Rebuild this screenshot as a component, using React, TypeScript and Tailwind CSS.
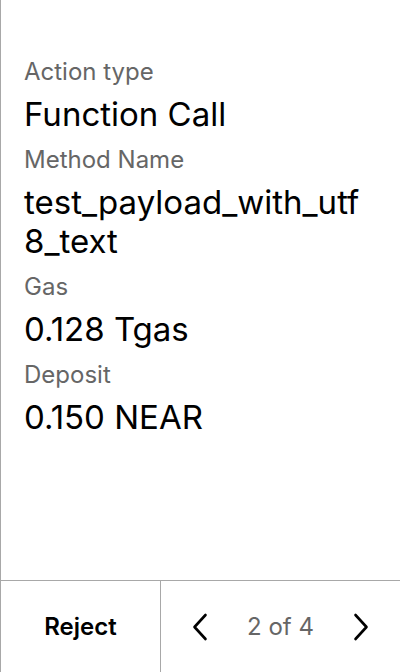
import React from "react";

const Field = ({ label, value }: { label: string; value: string }) => {
  return (
    <div>
      <div className="text-[24px] leading-[28px] text-[#666666] mb-[9px]">{label}</div>
      <div className="text-[33px] leading-[39px] text-black break-all mb-[12px]">{value}</div>
    </div>
  );
};

const App = () => {
  return (
    <div
      className="h-[672px] w-[400px] flex flex-col bg-white border-l border-[#a8a8a8]"
      style={{ fontFamily: "Inter, 'Noto Sans', sans-serif" }}
    >
      <div className="flex-1 pl-[23px] pr-[36px] pt-[58px]">
        <Field label="Action type" value="Function Call" />
        <Field label="Method Name" value="test_payload_with_utf8_text" />
        <Field label="Gas" value="0.128 Tgas" />
        <Field label="Deposit" value="0.150 NEAR" />
      </div>
      <div className="h-[92px] flex border-t border-[#a8a8a8]">
        <button className="w-[160px] border-r border-[#a8a8a8] text-[24px] font-semibold text-black">
          Reject
        </button>
        <div className="flex-1 flex items-center justify-between px-[28px]">
          <svg width="24" height="28" viewBox="0 0 24 28" fill="none" stroke="black" strokeWidth="2.6" strokeLinecap="round" strokeLinejoin="round">
            <path d="M16.5 2 L5.5 14 L16.5 26" />
          </svg>
          <span className="text-[24px] text-[#666666]">2 of 4</span>
          <svg width="24" height="28" viewBox="0 0 24 28" fill="none" stroke="black" strokeWidth="2.6" strokeLinecap="round" strokeLinejoin="round">
            <path d="M7.5 2 L18.5 14 L7.5 26" />
          </svg>
        </div>
      </div>
    </div>
  );
};

export default App;
